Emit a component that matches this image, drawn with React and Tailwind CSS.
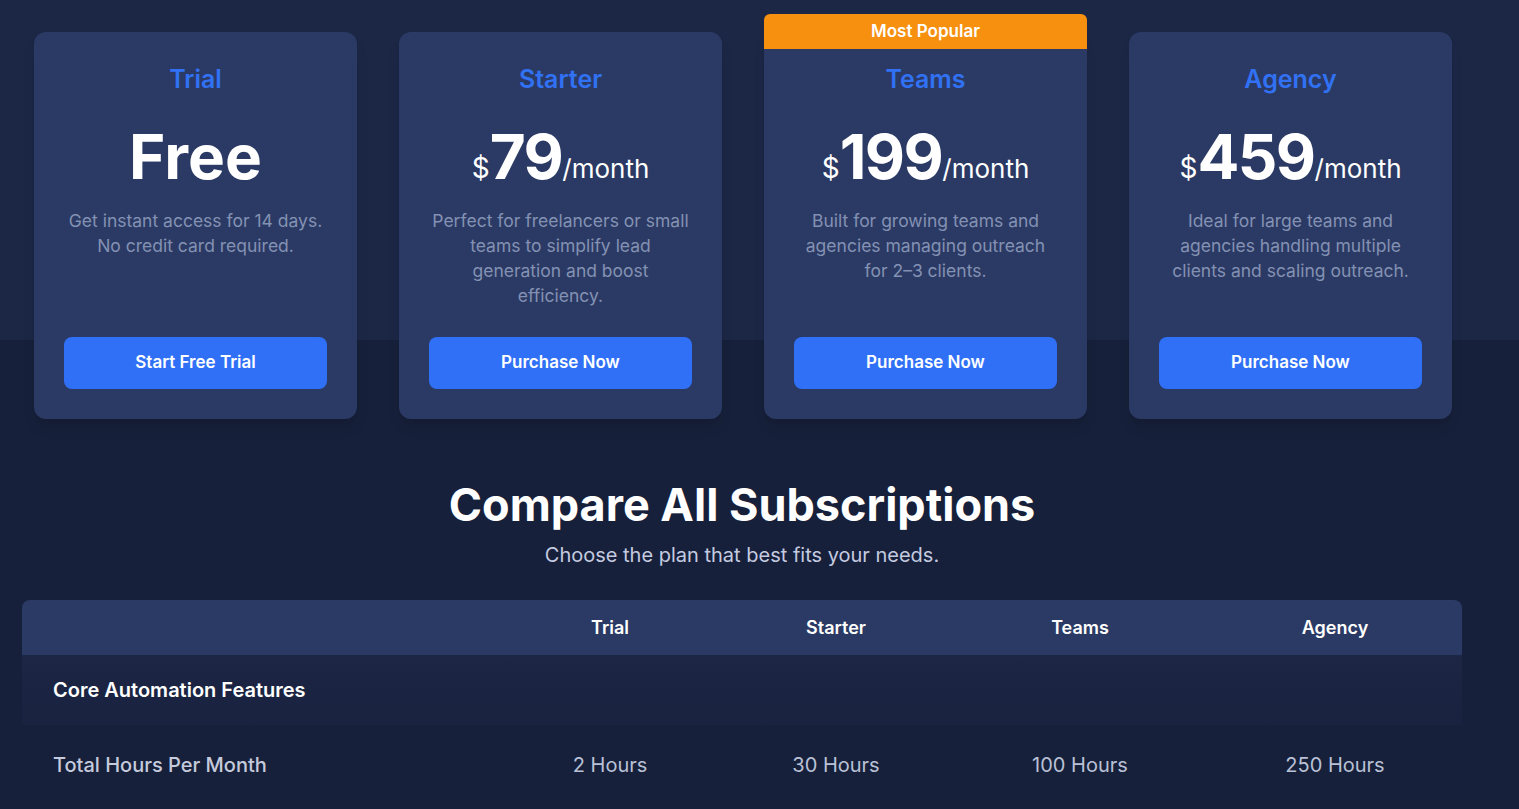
import React from 'react';

const plans = [
  {
    name: 'Trial',
    price: null,
    desc: 'Get instant access for 14 days. No credit card required.',
    cta: 'Start Free Trial',
  },
  {
    name: 'Starter',
    price: '79',
    desc: 'Perfect for freelancers or small teams to simplify lead generation and boost efficiency.',
    cta: 'Purchase Now',
  },
  {
    name: 'Teams',
    price: '199',
    desc: 'Built for growing teams and agencies managing outreach for 2–3 clients.',
    cta: 'Purchase Now',
    popular: true,
  },
  {
    name: 'Agency',
    price: '459',
    desc: 'Ideal for large teams and agencies handling multiple clients and scaling outreach.',
    cta: 'Purchase Now',
  },
];

const PlanCard = ({ plan }) => (
  <div className="relative flex h-[387px] flex-col items-center rounded-xl bg-[#2b3a64] px-[30px] pt-[30px] pb-[30px] text-center shadow-lg">
    {plan.popular && (
      <div className="absolute -top-[18px] left-0 right-0 flex h-[35px] items-center justify-center rounded-t-md bg-[#f7900f] text-[17px] font-semibold text-white">
        Most Popular
      </div>
    )}
    <h3 className="text-[25px] font-semibold leading-[34px] text-[#3171f3]">{plan.name}</h3>
    <div className="mt-[20px] flex h-[72px] items-end justify-center text-white">
      {plan.price ? (
        <>
          <span className="mb-[6px] text-[28px] leading-none">$</span>
          <span className="text-[62px] font-bold leading-none tracking-tight">{plan.price}</span>
          <span className="mb-[6px] text-[26px] leading-none">/month</span>
        </>
      ) : (
        <span className="text-[62px] font-bold leading-none">Free</span>
      )}
    </div>
    <p className="mt-[20px] max-w-[258px] text-[17.5px] leading-[25px] text-[#8391b3]">{plan.desc}</p>
    <button className="mt-auto h-[52px] w-full rounded-lg bg-[#2f70f6] text-[17px] font-semibold text-white">
      {plan.cta}
    </button>
  </div>
);

const cols = 'grid grid-cols-[478px_220px_232px_256px_254px] items-center';

const App = () => {
  return (
    <div
      className="min-h-screen bg-[#17203a] bg-[linear-gradient(to_bottom,#1c2746_0px,#1c2746_340px,#17203a_340px)] pt-[32px] pb-[20px]"
      style={{ fontFamily: 'Inter, "Noto Sans", sans-serif' }}
    >
      <div className="ml-[22px] w-[1440px]">
        <div className="grid grid-cols-[repeat(4,323px)] gap-[42px] px-[12px]">
          {plans.map((p) => (
            <PlanCard key={p.name} plan={p} />
          ))}
        </div>

        <div className="mt-[60px] text-center">
          <h2 className="text-[45px] font-bold leading-[52px] text-white">Compare All Subscriptions</h2>
          <p className="mt-[10px] text-[20px] leading-[28px] text-[#c4cbe0]">Choose the plan that best fits your needs.</p>
        </div>

        <div className="mt-[31px] overflow-hidden rounded-t-lg">
          <div className={`${cols} h-[55px] bg-[#2b3a64] text-[18px] font-semibold text-white`}>
            <div></div>
            <div className="text-center">Trial</div>
            <div className="text-center">Starter</div>
            <div className="text-center">Teams</div>
            <div className="text-center">Agency</div>
          </div>
          <div className={`${cols} h-[70px] bg-[linear-gradient(to_bottom,#1c2645,#19223f)]`}>
            <div className="pl-[31px] text-[20px] font-semibold text-white">Core Automation Features</div>
          </div>
          <div className={`${cols} h-[80px] text-[20px]`}>
            <div className="pl-[31px] font-medium text-[#c5cbdc]">Total Hours Per Month</div>
            <div className="text-center text-[#b9c1d6]">2 Hours</div>
            <div className="text-center text-[#b9c1d6]">30 Hours</div>
            <div className="text-center text-[#b9c1d6]">100 Hours</div>
            <div className="text-center text-[#b9c1d6]">250 Hours</div>
          </div>
        </div>
      </div>
    </div>
  );
};

export default App;
